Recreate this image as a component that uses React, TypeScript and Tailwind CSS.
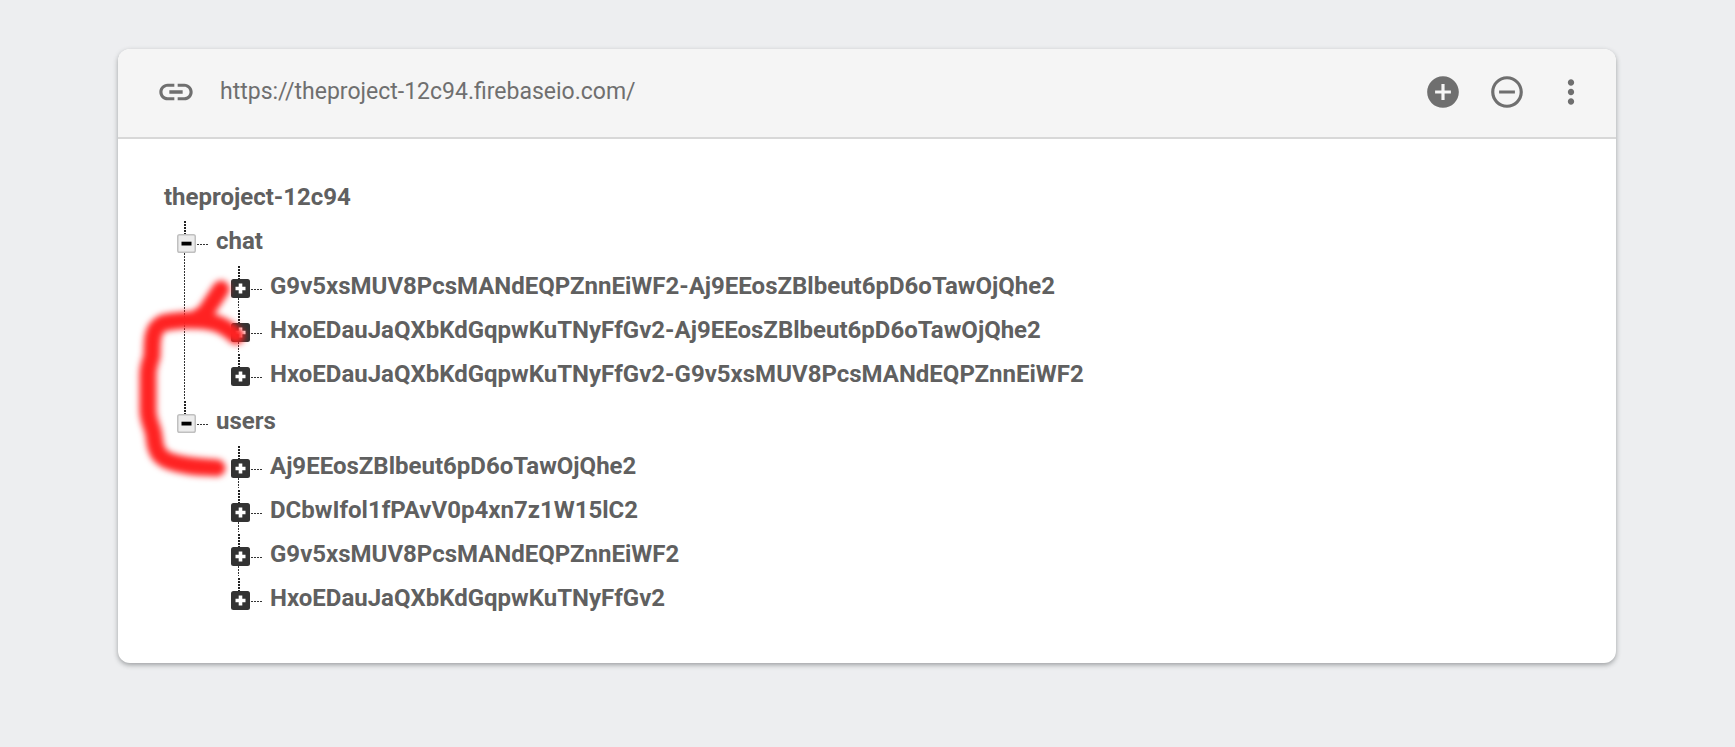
import { MdAddCircle, MdLink, MdMoreVert, MdRemoveCircleOutline } from 'react-icons/md';

type TreeNode = {
  name: string;
  children?: TreeNode[];
};

const databaseUrl = 'https://theproject-12c94.firebaseio.com/';

const root: TreeNode = {
  name: 'theproject-12c94',
  children: [
    {
      name: 'chat',
      children: [
        { name: 'G9v5xsMUV8PcsMANdEQPZnnEiWF2-Aj9EEosZBlbeut6pD6oTawOjQhe2' },
        { name: 'HxoEDauJaQXbKdGqpwKuTNyFfGv2-Aj9EEosZBlbeut6pD6oTawOjQhe2' },
        { name: 'HxoEDauJaQXbKdGqpwKuTNyFfGv2-G9v5xsMUV8PcsMANdEQPZnnEiWF2' },
      ],
    },
    {
      name: 'users',
      children: [
        { name: 'Aj9EEosZBlbeut6pD6oTawOjQhe2' },
        { name: 'DCbwIfol1fPAvV0p4xn7z1W15lC2' },
        { name: 'G9v5xsMUV8PcsMANdEQPZnnEiWF2' },
        { name: 'HxoEDauJaQXbKdGqpwKuTNyFfGv2' },
      ],
    },
  ],
};

function Toggle({ open, name }: { open: boolean; name: string }) {
  return (
    <button
      type="button"
      aria-label={`${open ? 'Collapse' : 'Expand'} ${name}`}
      aria-expanded={open}
      className="block size-[19px] shrink-0 cursor-pointer"
    >
      {open ? (
        <svg viewBox="0 0 19 19" className="size-full">
          <rect x="0.75" y="0.75" width="17.5" height="17.5" rx="1.8" fill="#ececec" stroke="#c0c0c0" strokeWidth="1.5" />
          <rect x="4.5" y="7.7" width="10" height="3.8" fill="#000" />
        </svg>
      ) : (
        <svg viewBox="0 0 19 19" className="size-full">
          <rect width="19" height="19" rx="2.5" fill="#333" />
          <path d="M7.7 4.5h3.6v3.2h3.2v3.6h-3.2v3.2H7.7v-3.2H4.5V7.7h3.2z" fill="#fff" />
        </svg>
      )}
    </button>
  );
}

function Branch({ nodes }: { nodes: TreeNode[] }) {
  return (
    <ul className="pb-[3px] pl-[13px] pt-px">
      {nodes.map((node, i) => (
        <li key={node.name} className="flex">
          {/* Guide line with the toggle on it */}
          <div className="flex w-[19px] shrink-0 flex-col">
            <div className="ml-[7px] mt-[2px] h-[13px] w-[2px] bg-[repeating-linear-gradient(to_bottom,#222_0_2px,#fff_2px_3px)]" />
            <Toggle open={!!node.children} name={node.name} />
            {i < nodes.length - 1 && (
              <div className="ml-[7px] w-px flex-1 bg-[repeating-linear-gradient(to_bottom,#333_0_2px,#fff_2px_3px)]" />
            )}
          </div>
          <div className="min-w-0 flex-1">
            <div className="flex h-11 items-center">
              <div className="ml-px mr-[7px] mt-[6px] h-px w-3 shrink-0 bg-[repeating-linear-gradient(to_right,#333_0_2px,#fff_2px_3px)]" />
              <span>{node.name}</span>
            </div>
            {node.children && (
              <div className="pl-[22px]">
                <Branch nodes={node.children} />
              </div>
            )}
          </div>
        </li>
      ))}
    </ul>
  );
}

// Hand-drawn marker that ties the chat keys to the user key
function Marker() {
  return (
    <svg
      viewBox="0 0 140 220"
      className="pointer-events-none absolute left-[13px] top-[132px] h-[220px] w-[140px] blur-[3px]"
      fill="none"
      stroke="#ff2222"
      strokeWidth="17"
      strokeLinecap="round"
      strokeLinejoin="round"
      aria-hidden="true"
    >
      <path d="M90 18 L74 42 L63 49" />
      <path d="M105 65 C98 58 90 53 80 51 C72 49 64 49 56 49 C46 50 38 50 32 52 C26 55 23 60 22 66 C21 73 21 79 21 85 C19 92 17 96 17 103 V139 C17 148 20 153 22 160 C24 167 23 173 26 179 C28 185 33 188 38 190 C54 196 70 196 86 197" />
    </svg>
  );
}

export default function App() {
  return (
    <div className="min-h-screen bg-[#edeef0] py-[49px] pl-[118px] pr-[119px] font-['Roboto',sans-serif]">
      <main className="rounded-xl bg-white shadow-[0_2px_5px_rgba(60,64,67,0.45)]">
        <header className="flex h-[90px] items-center rounded-t-xl border-b-2 border-[#d8d8d8] bg-[#f5f5f5] pb-[2px] pl-[38px] pr-[26px] text-[#6f6f6f]">
          <MdLink className="size-10 shrink-0" />
          <a href={databaseUrl} className="ml-6 text-[23px] leading-8">
            {databaseUrl}
          </a>
          <div className="ml-auto flex gap-[26px]">
            <button type="button" aria-label="Expand all" className="cursor-pointer">
              <MdAddCircle className="size-[38px]" />
            </button>
            <button type="button" aria-label="Collapse all" className="cursor-pointer">
              <MdRemoveCircleOutline className="size-[38px]" />
            </button>
            <button type="button" aria-label="More options" className="cursor-pointer">
              <MdMoreVert className="size-[38px]" />
            </button>
          </div>
        </header>

        <section className="relative px-[46px] pb-[37px] pt-[37px] text-2xl font-bold text-[#606060]">
          <div className="flex h-[42px] items-center">{root.name}</div>
          <Branch nodes={root.children ?? []} />
          <Marker />
        </section>
      </main>
    </div>
  );
}
